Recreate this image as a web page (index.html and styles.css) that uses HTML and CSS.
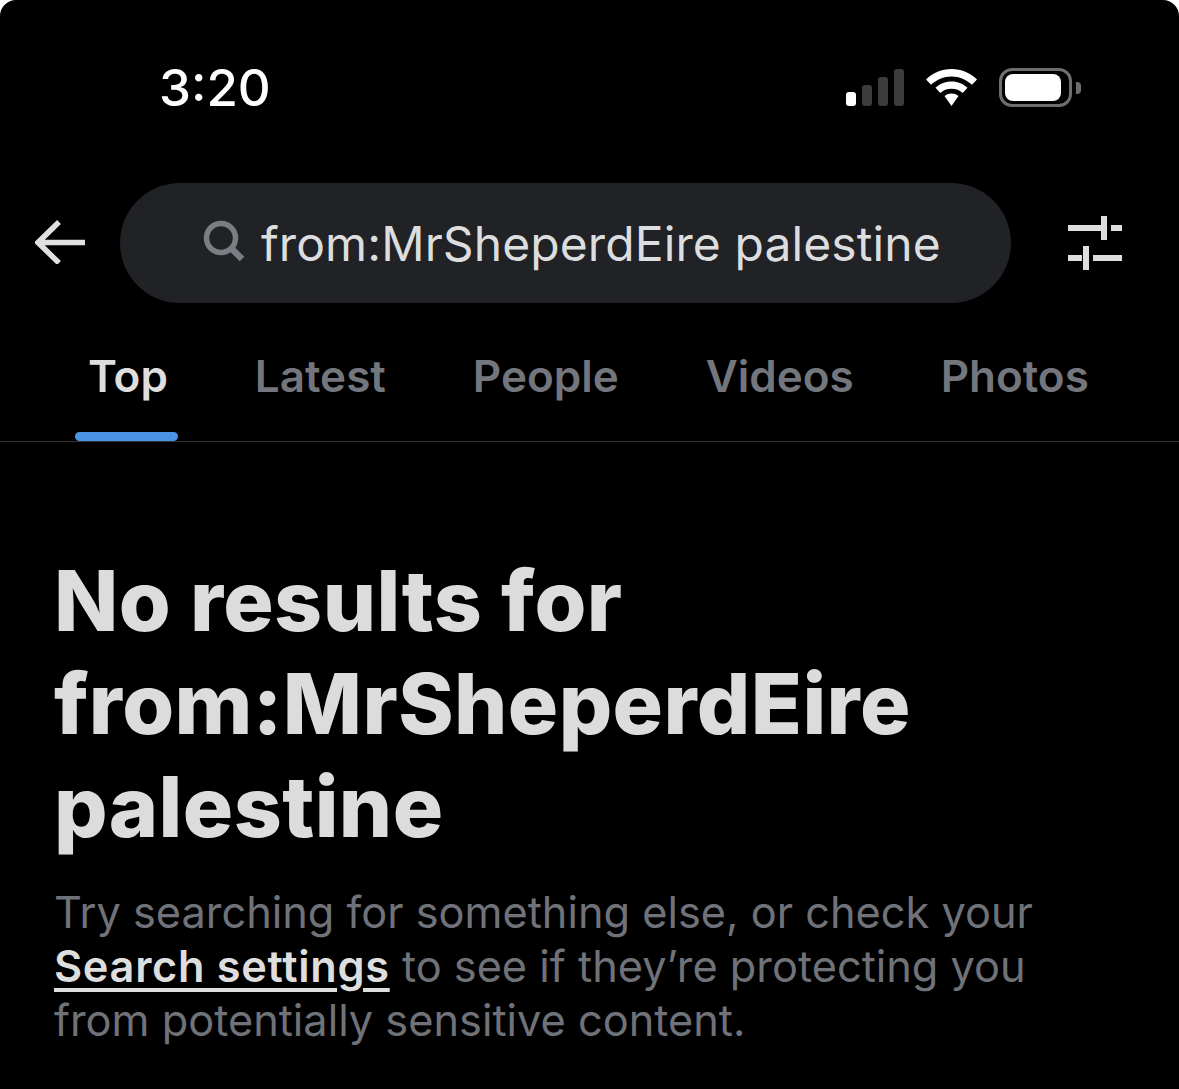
FILE: index.html
```html
<!DOCTYPE html>
<html lang="en">
<head>
<meta charset="utf-8">
<title>Search</title>
<link rel="stylesheet" href="styles.css">
</head>
<body>
<div class="screen">
  <div class="status">
    <span class="time">3:20</span>
    <div class="status-icons">
      <div class="signal"><i class="on b1"></i><i class="b2"></i><i class="b3"></i><i class="b4"></i></div>
      <svg class="wifi" width="51" height="37" viewBox="0 0 51 37"><path d="M25.500 0C15.500 0 7 3.800 0 10.500L5 15.800C10.500 10.800 17.500 7.500 25.500 7.500S40.500 10.800 46 15.800L51 10.500C44 3.800 35.500 0 25.500 0Z" fill="#fff"/><path d="M25.500 12.500C19 12.500 13.500 14.800 9.500 18.800L14.300 24C17.200 21.200 21 19.700 25.500 19.700S33.800 21.200 36.700 24L41.500 18.800C37.500 14.800 32 12.500 25.500 12.500Z" fill="#fff"/><path d="M25.500 24.500C23 24.500 20.500 25.300 18.500 27L25.500 37L32.500 27C30.500 25.300 28 24.500 25.500 24.500Z" fill="#fff"/></svg>
      <div class="battery"><div class="battery-body"><div class="battery-fill"></div></div><div class="battery-cap"></div></div>
    </div>
  </div>
  <div class="search-row">
    <svg class="back" width="52" height="44" viewBox="0 0 52 44"><path d="M24 2 L3 22.500 L24 43 M3 22.500 H50" fill="none" stroke="#e0e0e0" stroke-width="5.500"/></svg>
    <div class="search-pill">
      <svg class="lens" width="44" height="44" viewBox="0 0 44 44"><circle cx="19" cy="19" r="14.500" fill="none" stroke="#7a7d82" stroke-width="5.500"/><path d="M29 29 L40 40" stroke="#7a7d82" stroke-width="6.500"/></svg>
      <span class="query">from:MrSheperdEire palestine</span>
    </div>
    <svg class="filters" width="54" height="54" viewBox="0 0 54 54"><g fill="#dedede"><rect x="0" y="9" width="34" height="6"/><rect x="33" y="0" width="6" height="24"/><rect x="43" y="9" width="11" height="6"/><rect x="0" y="39" width="14" height="6"/><rect x="15" y="30" width="6" height="24"/><rect x="25" y="39" width="29" height="6"/></g></svg>
  </div>
  <nav class="tabs">
    <div class="tab active">Top</div>
    <div class="tab">Latest</div>
    <div class="tab">People</div>
    <div class="tab">Videos</div>
    <div class="tab">Photos</div>
  </nav>
  <main class="empty">
    <h1 class="title">No results for from:MrSheperdEire palestine</h1>
    <p class="hint">Try searching for something else, or check your <a class="link">Search settings</a> to see if they’re protecting you from potentially sensitive content.</p>
  </main>
</div>
</body>
</html>
```
FILE: styles.css
```css
* { box-sizing: border-box; }
html, body { margin: 0; padding: 0; background: #fff; }
.screen {
  width: 1179px;
  height: 1089px;
  background: #000;
  border-radius: 16px 16px 0 0;
  overflow: hidden;
  font-family: Inter, "Liberation Sans", sans-serif;
}
.status {
  height: 183px;
  padding: 59px 98px 0 159px;
  display: flex;
  justify-content: space-between;
  align-items: flex-start;
}
.time { color: #fff; font-size: 51px; font-weight: 500; line-height: 58px; }
.status-icons { display: flex; align-items: center; gap: 22px; margin-top: 9px; }
.signal { display: flex; align-items: flex-end; gap: 6px; height: 37px; }
.signal i { width: 10px; background: #3c3c3c; border-radius: 3px; display: block; }
.signal .on { background: #fff; }
.signal .b1 { height: 14px; }
.signal .b2 { height: 21px; }
.signal .b3 { height: 29px; }
.signal .b4 { height: 37px; }
.battery { display: flex; align-items: center; gap: 4px; }
.battery-body { width: 73px; height: 39px; border: 3px solid #6e6e6e; border-radius: 13px; padding: 3px 8px 3px 3px; }
.battery-fill { width: 100%; height: 100%; background: #fff; border-radius: 8px; }
.battery-cap { width: 5px; height: 12px; background: #6e6e6e; border-radius: 0 4px 4px 0; }
.search-row { display: flex; align-items: center; height: 120px; padding-left: 35px; }
.back { flex: none; margin-right: 33px; margin-top: -2px; }
.search-pill {
  width: 891px;
  height: 120px;
  background: #202226;
  border-radius: 60px;
  display: flex;
  align-items: center;
  padding-left: 82px;
  gap: 15px;
  flex: none;
}
.lens { flex: none; margin-top: -4px; }
.query { color: #dcdddf; font-size: 48px; letter-spacing: 0.1px; white-space: nowrap; }
.filters { flex: none; margin-left: 57px; }
.tabs {
  height: 139px;
  border-bottom: 1px solid #333;
  display: flex;
  gap: 87px;
  padding: 44px 0 0 88px;
  font-size: 44px;
  font-weight: 600;
  color: #73767c;
}
.tab { line-height: 58px; }
.active { color: #dedede; position: relative; }
.active::after {
  content: "";
  position: absolute;
  left: -13px;
  right: -10px;
  top: 85px;
  height: 9px;
  background: #4a94e4;
  border-radius: 5px;
}
.empty { padding: 107px 0 0 54px; }
.title {
  margin: 0;
  width: 960px;
  color: #dcdcdc;
  font-size: 84px;
  font-weight: 800;
  line-height: 103px;
  letter-spacing: 0.4px;
}
.hint {
  margin: 27px 0 0;
  width: 1000px;
  color: #6f7278;
  font-size: 43.3px;
  line-height: 54px;
}
.link { color: #dedede; font-weight: 600; letter-spacing: 0.7px; text-decoration: underline; text-decoration-thickness: 4px; text-underline-offset: 6px; }
```
